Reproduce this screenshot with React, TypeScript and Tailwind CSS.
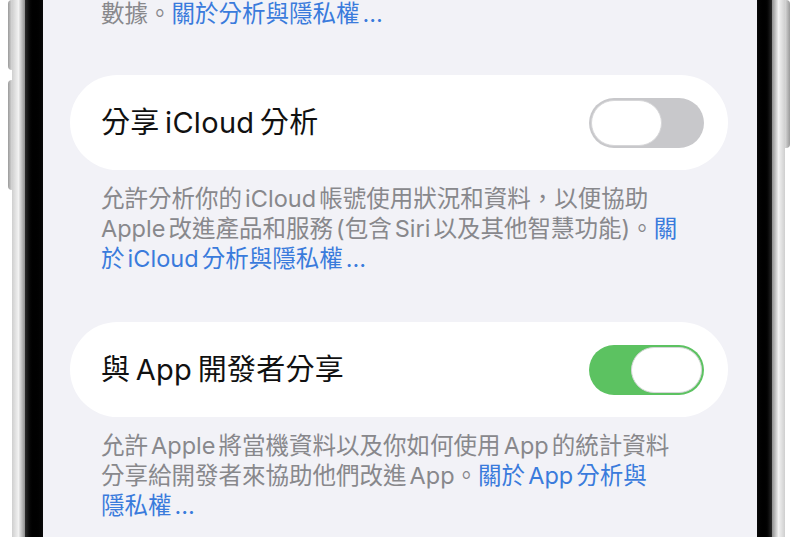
import React from "react";

const font = { fontFamily: '"Inter", "Noto Sans CJK TC", "Noto Sans", sans-serif' };

function Toggle({ on }: { on: boolean }) {
  return (
    <div
      className={`flex h-[50px] w-[115px] shrink-0 items-center rounded-full p-[2px] ${
        on ? "justify-end bg-[#5cc261]" : "justify-start bg-[#c8c8cb]"
      }`}
    >
      <div className="h-[46px] w-[71px] rounded-full border border-[#d6d6d8] bg-white" />
    </div>
  );
}

function Card({ title, on }: { title: string; on: boolean }) {
  return (
    <div className="flex h-[95px] items-center justify-between rounded-full bg-white pl-[31px] pr-[24px]">
      <span className="whitespace-nowrap text-[29px] leading-none tracking-[0.3px] text-[#111] [word-spacing:-3px]">
        {title}
      </span>
      <Toggle on={on} />
    </div>
  );
}

export default function App() {
  return (
    <div className="flex h-[537px] w-[800px] overflow-hidden bg-white" style={font}>
      {/* left side with buttons */}
      <div className="flex w-[12px] shrink-0 flex-col items-end">
        <div className="h-[70px] w-[4px] rounded-l-sm bg-gradient-to-r from-[#9a9a9a] to-[#d9d9d9]" />
        <div className="mt-[10px] h-[110px] w-[4px] rounded-l-sm bg-gradient-to-r from-[#9a9a9a] to-[#d9d9d9]" />
      </div>
      <div className="w-[13px] shrink-0 bg-gradient-to-r from-[#cfcfcf] via-[#f2f2f2] to-[#8e8e8e]" />
      <div className="w-[18px] shrink-0 bg-gradient-to-r from-[#2a2a2a] via-black to-[#0a0a0a]" />

      {/* screen */}
      <div className="flex w-[714px] shrink-0 flex-col bg-[#f2f2f7] pl-[27px] pr-[29px]">
        <p className="-mt-[1px] whitespace-nowrap pl-[31px] text-[23.5px] leading-[30px] text-[#88888c] [word-spacing:-3.5px]">
          數據。<span className="text-[#3a7bdc]">關於分析與隱私權 …</span>
        </p>
        <div className="mt-[46px]">
          <Card title="分享 iCloud 分析" on={false} />
        </div>
        <p className="mt-[14px] whitespace-nowrap pl-[31px] text-[23.5px] leading-[30px] text-[#88888c] [word-spacing:-3.5px]">
          允許分析你的 iCloud 帳號使用狀況和資料，以便協助
          <br />
          Apple 改進產品和服務 (包含 Siri 以及其他智慧功能)。
          <span className="text-[#3a7bdc]">
            關
            <br />
            於 iCloud 分析與隱私權 …
          </span>
        </p>
        <div className="mt-[48px]">
          <Card title="與 App 開發者分享" on={true} />
        </div>
        <p className="mt-[14px] whitespace-nowrap pl-[31px] text-[23.5px] leading-[30px] text-[#88888c] [word-spacing:-3.5px]">
          允許 Apple 將當機資料以及你如何使用 App 的統計資料
          <br />
          分享給開發者來協助他們改進 App。
          <span className="text-[#3a7bdc]">
            關於 App 分析與
            <br />
            隱私權 …
          </span>
        </p>
      </div>

      <div className="w-[15px] shrink-0 bg-gradient-to-r from-[#0a0a0a] via-black to-[#2a2a2a]" />
      <div className="w-[13px] shrink-0 bg-gradient-to-r from-[#8e8e8e] via-[#f2f2f2] to-[#cfcfcf]" />
      <div className="flex w-[5px] shrink-0 flex-col">
        <div className="h-[148px] w-[5px] rounded-r-sm bg-gradient-to-r from-[#d9d9d9] to-[#9a9a9a]" />
      </div>
      <div className="w-[10px] shrink-0 bg-white" />
    </div>
  );
}
